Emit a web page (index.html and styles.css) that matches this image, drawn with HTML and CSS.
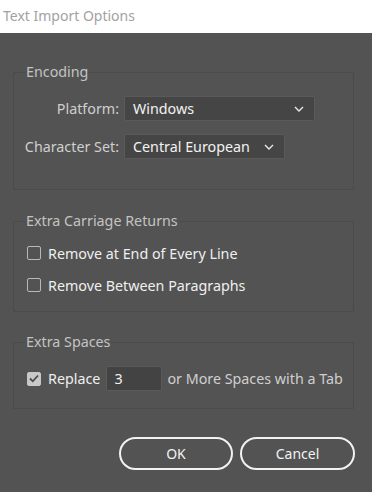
FILE: index.html
```html
<!DOCTYPE html>
<html>
<head>
    <title>Text Import Options</title>
    <link rel="stylesheet" href="styles.css">
</head>
<body>
    <div class="titlebar">Text Import Options</div>

    <div class="dialog">
        <fieldset class="group encoding">
            <legend>Encoding</legend>
            <div class="field-grid">
                <label>Platform:</label>
                <div class="dropdown wide">
                    <span>Windows</span>
                    <svg width="10" height="6" viewBox="0 0 10 6"><path d="M1 1l4 4 4-4" fill="none" stroke="#e8e8e8" stroke-width="1.4"/></svg>
                </div>

                <label>Character Set:</label>
                <div class="dropdown narrow">
                    <span>Central European</span>
                    <svg width="10" height="6" viewBox="0 0 10 6"><path d="M1 1l4 4 4-4" fill="none" stroke="#e8e8e8" stroke-width="1.4"/></svg>
                </div>
            </div>
        </fieldset>

        <fieldset class="group returns">
            <legend>Extra Carriage Returns</legend>
            <div class="check-row">
                <span class="checkbox"></span>
                <span>Remove at End of Every Line</span>
            </div>
            <div class="check-row">
                <span class="checkbox"></span>
                <span>Remove Between Paragraphs</span>
            </div>
        </fieldset>

        <fieldset class="group spaces">
            <legend>Extra Spaces</legend>
            <div class="check-row">
                <span class="checkbox checked">
                    <svg width="10" height="9" viewBox="0 0 10 9"><path d="M1 4.5l2.8 2.8L9 1.5" fill="none" stroke="#4a4a4a" stroke-width="1.8"/></svg>
                </span>
                <span>Replace</span>
                <span class="num-input">3</span>
                <span class="muted">or More Spaces with a Tab</span>
            </div>
        </fieldset>

        <div class="buttons">
            <button class="btn ok">OK</button>
            <button class="btn">Cancel</button>
        </div>
    </div>
</body>
</html>
```

FILE: styles.css
```css
body {
    margin: 0;
    padding: 0;
    font-family: "Noto Sans", "Open Sans", sans-serif;
    font-size: 14.3px;
    background-color: #535353;
}

.titlebar {
    height: 33px;
    line-height: 31px;
    background-color: #fff;
    color: #a2a2a2;
    font-size: 14px;
    padding-left: 3px;
}

.dialog {
    height: 459px;
    padding: 0 18px 0 13px;
    background-color: #535353;
    overflow: hidden;
}

.group {
    margin: 0;
    border: 1px solid #4b4b4b;
    border-radius: 2px;
    padding: 0 4px 0 12px;
    color: #efefef;
}

.group legend {
    padding: 0 1px;
    margin-left: -1px;
    line-height: 18px;
    color: #c3c3c3;
}

.encoding {
    margin-top: 30px;
    padding-top: 15px;
    padding-bottom: 30px;
}

.returns {
    margin-top: 22px;
    padding-top: 13px;
    padding-bottom: 16px;
}

.spaces {
    margin-top: 21px;
    padding-top: 15px;
    padding-bottom: 17px;
}

.field-grid {
    display: grid;
    grid-template-columns: 93px 1fr;
    column-gap: 5px;
    row-gap: 13px;
    align-items: center;
}

.field-grid label {
    justify-self: end;
    white-space: nowrap;
    color: #cfcfcf;
}

.dropdown {
    height: 25px;
    box-sizing: border-box;
    display: flex;
    align-items: center;
    justify-content: space-between;
    padding: 0 10px 0 8px;
    background-color: #454545;
    border: 1px solid #5a5a5a;
    border-radius: 2px;
    color: #f2f2f2;
}

.dropdown.wide {
    width: 191px;
}

.dropdown.narrow {
    width: 161px;
}

.check-row {
    display: flex;
    align-items: center;
    height: 20px;
    margin-left: 1px;
    white-space: nowrap;
}

.check-row + .check-row {
    margin-top: 12px;
}

.spaces .check-row {
    height: 25px;
}

.checkbox {
    width: 14px;
    height: 14px;
    flex-shrink: 0;
    box-sizing: border-box;
    border: 1px solid #b9b9b9;
    border-radius: 2px;
    margin-right: 7px;
    display: flex;
    align-items: center;
    justify-content: center;
}

.checkbox.checked {
    background-color: #c8c8c8;
    border-color: #c8c8c8;
}

.num-input {
    width: 56px;
    height: 25px;
    flex-shrink: 0;
    box-sizing: border-box;
    margin: 0 5px 0 6px;
    padding-left: 7px;
    line-height: 23px;
    background-color: #434343;
    border: 1px solid #5a5a5a;
    border-radius: 2px;
    color: #f2f2f2;
}

.muted {
    color: #cfcfcf;
}

.buttons {
    display: flex;
    justify-content: flex-end;
    gap: 7px;
    margin-top: 28px;
    margin-right: -1px;
}

.btn {
    width: 115px;
    height: 33px;
    background: transparent;
    border: 2px solid #f2f2f2;
    border-radius: 17px;
    color: #f2f2f2;
    font-family: inherit;
    font-size: 14px;
}

.btn.ok {
    width: 114px;
}
```
